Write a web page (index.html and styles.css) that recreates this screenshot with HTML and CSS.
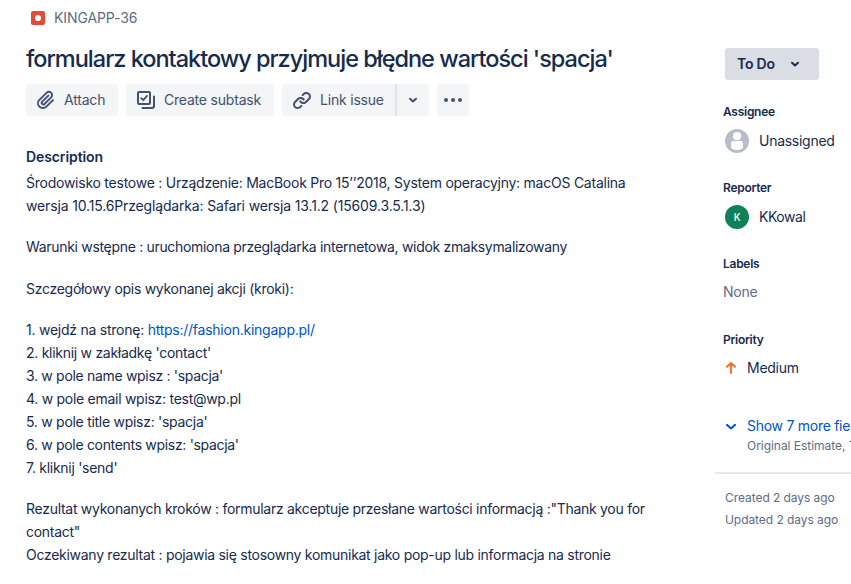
FILE: index.html
```html
<!DOCTYPE html>
<html lang="pl">
<head>
<meta charset="utf-8">
<title>KINGAPP-36</title>
<link rel="stylesheet" href="styles.css">
</head>
<body>
<div class="issue">
  <main class="main">
    <div class="crumb">
      <svg width="14" height="14" viewBox="0 0 14 14"><rect width="14" height="14" rx="2" fill="#e5493a"/><circle cx="7" cy="7" r="3.1" fill="#fff"/></svg>
      <span class="key">KINGAPP-36</span>
    </div>
    <h1><span>formularz kontaktowy przyjmuje błędne wartości 'spacja'</span></h1>
    <div class="actions">
      <button class="btn attach">
        <svg width="24" height="24" viewBox="0 0 24 24"><path d="M11.643 17.965c-1.53 1.495-4.016 1.496-5.542.004a3.773 3.773 0 0 1 .002-5.412l7.147-6.985a2.316 2.316 0 0 1 3.233-.003c.893.873.895 2.282.004 3.153l-6.703 6.55a.653.653 0 0 1-.914-.008.62.62 0 0 1 0-.902l6.229-6.087a.941.941 0 0 0 0-1.353.995.995 0 0 0-1.384 0l-6.23 6.087a2.502 2.502 0 0 0 0 3.607 2.643 2.643 0 0 0 3.683.009l6.703-6.55a4.074 4.074 0 0 0-.003-5.859 4.306 4.306 0 0 0-6.002.003l-7.148 6.985a5.655 5.655 0 0 0-.001 8.118c2.29 2.239 6.015 2.238 8.31-.005l6.686-6.533a.941.941 0 0 0 0-1.353.995.995 0 0 0-1.384 0l-6.686 6.534z" fill="currentColor"/></svg>
        <span>Attach</span>
      </button>
      <button class="btn subtask">
        <svg width="24" height="24" viewBox="0 0 24 24" fill="none" stroke="currentColor" stroke-width="2"><rect x="4" y="4" width="12" height="12" rx="1"/><path d="M7.2 10.1l2.1 2.1 3.7-4.3" stroke-linecap="round" stroke-linejoin="round" stroke-width="1.8"/><path d="M20 8.5V18a2 2 0 0 1-2 2H8.5" stroke-linecap="round"/></svg>
        <span>Create subtask</span>
      </button>
      <div class="split">
        <button class="btn link">
          <svg width="24" height="24" viewBox="0 0 24 24" fill="currentColor"><path d="M12.856 5.457l-.937.92a1.002 1.002 0 0 0 0 1.437 1.047 1.047 0 0 0 1.463 0l.984-.966c.967-.95 2.542-1.135 3.602-.288a2.54 2.54 0 0 1 .203 3.81l-2.903 2.852a2.646 2.646 0 0 1-3.696 0l-1.11-1.09L9 13.57l1.108 1.089c1.822 1.788 4.802 1.788 6.622 0l2.905-2.852a4.558 4.558 0 0 0-.357-6.82c-1.893-1.517-4.695-1.226-6.422.47"/><path d="M11.144 19.543l.937-.92a1.002 1.002 0 0 0 0-1.437 1.047 1.047 0 0 0-1.462 0l-.985.966c-.967.95-2.542 1.135-3.602.288a2.54 2.54 0 0 1-.203-3.81l2.903-2.852a2.646 2.646 0 0 1 3.696 0l1.11 1.09L15 11.43l-1.108-1.089c-1.822-1.788-4.802-1.788-6.622 0l-2.905 2.852a4.558 4.558 0 0 0 .357 6.82c1.893 1.517 4.695 1.226 6.422-.47"/></svg>
          <span>Link issue</span>
        </button>
        <button class="btn drop"><svg width="10" height="8" viewBox="0 0 10 8"><path d="M2 2.7l3 2.8 3-2.8" class="chev"/></svg></button>
      </div>
      <button class="btn more"><svg width="18" height="4" viewBox="0 0 18 4" fill="currentColor"><circle cx="2" cy="2" r="2"/><circle cx="9" cy="2" r="2"/><circle cx="16" cy="2" r="2"/></svg></button>
    </div>
    <h2><span>Description</span></h2>
    <div class="desc">
      <p><span class="loose">Środowisko testowe : Urządzenie: MacBook Pro 15’’2018, System operacyjny: macOS Catalina</span><br><span class="looser">wersja 10.15.6Przeglądarka: Safari wersja 13.1.2 (15609.3.5.1.3)</span></p>
      <p class="tight">Warunki wstępne : uruchomiona przeglądarka internetowa, widok zmaksymalizowany</p>
      <p>Szczegółowy opis wykonanej akcji (kroki):</p>
      <p><span class="loose">1. wejdź na stronę: <a href="#">https://fashion.kingapp.pl/</a></span><br>
      2. kliknij w zakładkę 'contact'<br>
      <span class="tight">3. w pole name wpisz : 'spacja'</span><br>
      4. w pole email wpisz: test@wp.pl<br>
      5. w pole title wpisz: 'spacja'<br>
      <span class="tight">6. w pole contents wpisz: 'spacja'</span><br>
      7. kliknij 'send'</p>
      <p>Rezultat wykonanych kroków : formularz akceptuje przesłane wartości informacją :"Thank you for<br>contact"<br>
      Oczekiwany rezultat : pojawia się stosowny komunikat jako pop-up lub informacja na stronie</p>
    </div>
  </main>
  <aside class="side">
    <button class="status"><span>To Do</span><svg width="10" height="8" viewBox="0 0 10 8"><path d="M2 2.7l3 2.8 3-2.8" class="chev"/></svg></button>
    <section class="field">
      <h3>Assignee</h3>
      <div class="value person">
        <svg width="24" height="24" viewBox="0 0 24 24"><circle cx="12" cy="12" r="12" fill="#b6bec9"/><circle cx="12" cy="7.2" r="4.1" fill="#fff"/><path d="M6 14.2a2.2 2.2 0 0 1 2.2-2.2h7.6a2.2 2.2 0 0 1 2.2 2.2v3.6c0 2-2.6 3.2-6 3.2s-6-1.2-6-3.2z" fill="#fff"/></svg>
        <span>Unassigned</span>
      </div>
    </section>
    <section class="field">
      <h3>Reporter</h3>
      <div class="value person reporter"><b class="avatar">K</b><span>KKowal</span></div>
    </section>
    <section class="field">
      <h3>Labels</h3>
      <div class="value none">None</div>
    </section>
    <section class="field">
      <h3>Priority</h3>
      <div class="value priority">
        <svg width="16" height="16" viewBox="0 0 16 16"><path d="M8 13V3.5M4 6.8L8 2.9l4 3.9" fill="none" stroke="#ed702d" stroke-width="1.9" stroke-linecap="round" stroke-linejoin="round"/></svg>
        <span>Medium</span>
      </div>
    </section>
    <div class="expand">
      <svg width="16" height="16" viewBox="0 0 16 16"><path d="M3.9 6.8L8 10.5l4.1-3.7" class="chev"/></svg>
      <div><div class="expand-title">Show 7 more fields</div><div class="expand-sub">Original Estimate, Time tracking</div></div>
    </div>
    <div class="dates"><div>Created 2 days ago</div><div>Updated 2 days ago</div></div>
  </aside>
</div>
</body>
</html>
```
FILE: styles.css
```css
* { box-sizing: border-box; }
body {
  margin: 0;
  width: 851px;
  height: 584px;
  overflow: hidden;
  background: #fff;
  color: #172b4d;
  font: 14px/20px Inter, "Liberation Sans", sans-serif;
  letter-spacing: -0.2px;
}
h1, h2, h3, p { margin: 0; }
button { border: 0; font: inherit; letter-spacing: inherit; color: inherit; padding: 0; }
svg { display: block; flex: none; }
.chev { fill: none; stroke: currentColor; stroke-width: 2; stroke-linecap: round; stroke-linejoin: round; }

.issue { display: flex; height: 584px; }
.main { width: 715px; flex: none; padding: 8px 0 0 26px; white-space: nowrap; }
.crumb { display: flex; align-items: center; gap: 9px; height: 20px; padding-left: 5px; color: #5e6c84; letter-spacing: -0.1px; }
h1 { margin-top: 17px; font-size: 23.5px; line-height: 28px; font-weight: 500; letter-spacing: -1px; }

.actions { display: flex; gap: 8px; margin-top: 11px; height: 32px; color: #42526e; }
.btn { display: flex; align-items: center; height: 32px; background: #f4f5f7; border-radius: 3px; }
.attach { width: 92px; padding-left: 8px; gap: 6px; }
.subtask { width: 148px; padding-left: 8px; gap: 6px; }
.split { display: flex; width: 147px; }
.link { width: 115px; padding-left: 8px; gap: 6px; border-right: 2px solid #dfe1e6; border-radius: 3px 0 0 3px; }
.drop { width: 32px; justify-content: center; border-radius: 0 3px 3px 0; }
.more { width: 32px; justify-content: center; }

h2 { margin-top: 31px; font-size: 14px; line-height: 20px; font-weight: 600; letter-spacing: -0.1px; }
.desc { margin-top: 4px; line-height: 23px; letter-spacing: -0.28px; }
.desc p + p { margin-top: 18.33px; }
.loose { letter-spacing: -0.245px; }
.looser { letter-spacing: -0.155px; }
.tight { letter-spacing: -0.315px; }
a { color: #0052cc; text-decoration: none; }

.side { width: 136px; flex: none; padding-top: 48px; overflow: hidden; white-space: nowrap; letter-spacing: -0.27px; }
.status { display: flex; align-items: center; gap: 15px; width: 94px; height: 32px; margin-left: 10px; padding-left: 12px; background: #dadde3; border-radius: 3px; font-weight: 600; letter-spacing: -0.2px; }
.field { height: 76px; padding-left: 8px; }
.status + .field { margin-top: 24px; }
h3 { font-size: 12px; line-height: 16px; font-weight: 600; }
.value { display: flex; align-items: center; height: 24px; margin-top: 9px; }
.person { padding-left: 2px; gap: 10px; }
.reporter { letter-spacing: -0.45px; }
.none, .priority { margin-top: 8px; }
.none { color: #5e6c84; }
.priority { gap: 8px; }
.avatar { width: 24px; height: 24px; margin-top: -1px; border-radius: 50%; background: #108056; color: #fff; font-size: 10px; line-height: 24px; font-weight: 500; text-align: center; }
.expand { display: flex; gap: 8px; padding-left: 8px; margin-top: 8px; color: #0052cc; }
.expand svg { margin-top: 2px; }
.expand-sub { font-size: 12px; color: #5e6c84; letter-spacing: -0.04px; }
.dates { margin-top: 16px; border-top: 2px solid #e6e8ed; padding: 13px 0 0 10px; font-size: 12px; line-height: 22px; color: #5e6c84; letter-spacing: -0.06px; }
```
